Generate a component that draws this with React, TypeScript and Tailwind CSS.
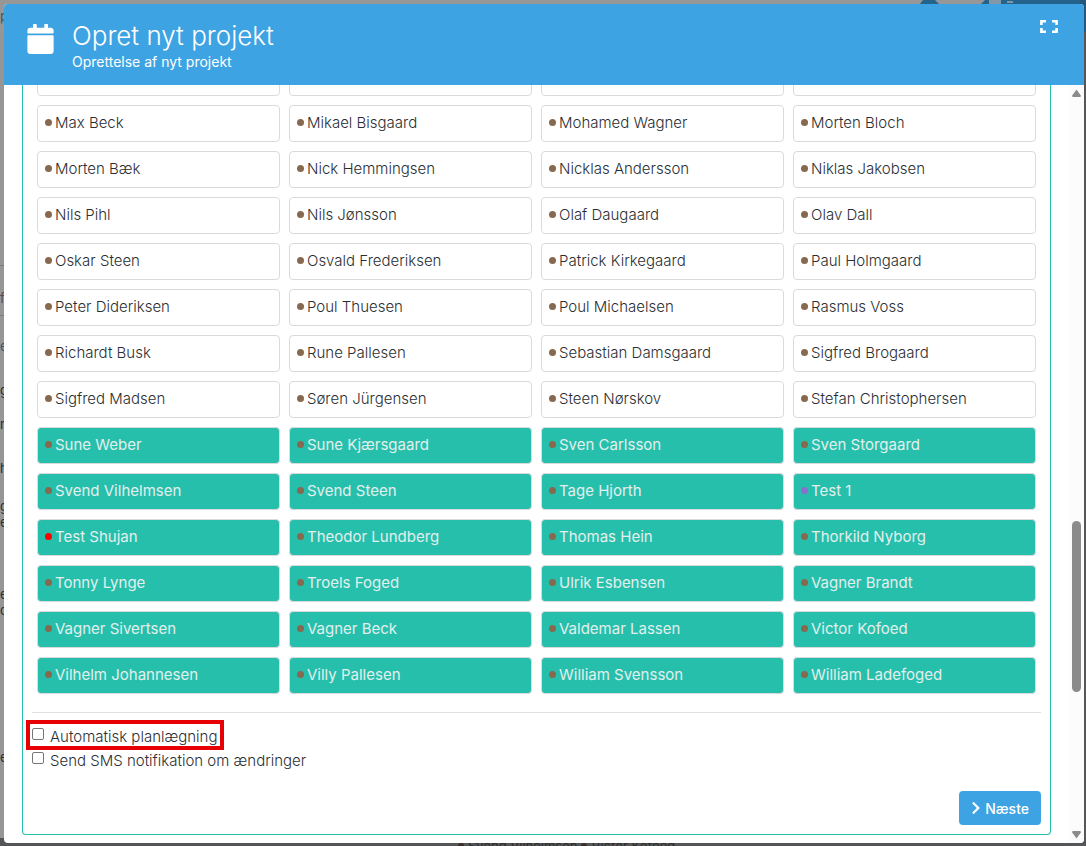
import React from "react";
import { FaCalendar, FaChevronRight } from "react-icons/fa";

type Person = { name: string; selected?: boolean; tone?: "brown" | "red" | "violet" };

const available = [
  "Max Beck", "Mikael Bisgaard", "Mohamed Wagner", "Morten Bloch",
  "Morten Bæk", "Nick Hemmingsen", "Nicklas Andersson", "Niklas Jakobsen",
  "Nils Pihl", "Nils Jønsson", "Olaf Daugaard", "Olav Dall",
  "Oskar Steen", "Osvald Frederiksen", "Patrick Kirkegaard", "Paul Holmgaard",
  "Peter Dideriksen", "Poul Thuesen", "Poul Michaelsen", "Rasmus Voss",
  "Richardt Busk", "Rune Pallesen", "Sebastian Damsgaard", "Sigfred Brogaard",
  "Sigfred Madsen", "Søren Jürgensen", "Steen Nørskov", "Stefan Christophersen",
];

const chosen = [
  "Sune Weber", "Sune Kjærsgaard", "Sven Carlsson", "Sven Storgaard",
  "Svend Vilhelmsen", "Svend Steen", "Tage Hjorth", "Test 1",
  "Test Shujan", "Theodor Lundberg", "Thomas Hein", "Thorkild Nyborg",
  "Tonny Lynge", "Troels Foged", "Ulrik Esbensen", "Vagner Brandt",
  "Vagner Sivertsen", "Vagner Beck", "Valdemar Lassen", "Victor Kofoed",
  "Vilhelm Johannesen", "Villy Pallesen", "William Svensson", "William Ladefoged",
];

const people: Person[] = [
  ...available.map((name): Person => ({ name })),
  ...chosen.map((name): Person => ({
    name,
    selected: true,
    tone: name === "Test 1" ? "violet" : name === "Test Shujan" ? "red" : "brown",
  })),
];

const tones = {
  brown: "bg-[#86694f]",
  red: "bg-[#ff0000]",
  violet: "bg-[#8a6fd0]",
};

function PersonCard({ name, selected, tone = "brown" }: Person) {
  return (
    <button
      type="button"
      aria-pressed={!!selected}
      className={
        "flex h-[37px] items-start gap-[3px] rounded-[4px] border border-[#d9dadb] px-[7px] pt-[7px] text-left text-[15px] leading-5 whitespace-nowrap " +
        (selected ? "bg-[#26bfac] text-[#e3efec]" : "bg-white font-light text-[#2b2f33]")
      }
    >
      <span className={"mt-[6px] size-[7px] shrink-0 rounded-full " + tones[tone]} />
      <span>{name}</span>
    </button>
  );
}

function Backdrop() {
  return (
    <div aria-hidden="true" className="flex h-full flex-col bg-[#555657] text-[13px] leading-4 text-[#2c2c2c]">
      <div className="flex h-8 shrink-0 justify-between bg-[#979797]">
        <span className="pt-2 text-[#40536b]">p</span>
        <div className="flex">
          <svg className="h-1 w-[160px]" viewBox="0 0 160 4">
            <path d="M0 4 3 0H15L19 4ZM61 4 65 0H160V4Z" fill="#24638c" />
            <path d="M69 0H81V4H69ZM87 1H93V3H87Z" fill="#8298a8" />
          </svg>
          <div className="h-8 w-[6px] bg-[#24597c]" />
        </div>
      </div>
      <div className="flex min-h-0 flex-1">
        <div className="flex w-10 flex-col bg-[#979696]">
          <div className="mt-[233px] h-[51px] border-y border-[#7e7e7e] pt-[24px] text-[#5d4b42]">ft</div>
          <div className="mt-[22px] text-[#40536b]">e</div>
          <div className="mt-[28px]">g</div>
          <div className="mt-[18px]">r</div>
          <div className="mt-[28px]">h</div>
          <div className="mt-[22px]">g</div>
          <div>e</div>
          <div className="mt-[56px]">e</div>
          <div>c</div>
          <div className="mt-[131px]">e</div>
        </div>
      </div>
      <div className="flex h-[8px] shrink-0 items-start gap-1 overflow-hidden bg-[#555657] pl-[458px]">
        <span className="flex items-center gap-1">
          <i className="size-[6px] rounded-full bg-[#3a2f2a]" />
          Svend Vilhelmsen
        </span>
        <span className="flex items-center gap-1">
          <i className="size-[6px] rounded-full bg-[#3a2f2a]" />
          Victor Kofoed
        </span>
      </div>
    </div>
  );
}

function ScrollBar() {
  return (
    <div aria-hidden="true" className="flex w-[15px] shrink-0 flex-col items-center bg-[#fcfcfc] pt-[4px] pb-1">
      <svg className="size-[9px] shrink-0" viewBox="0 0 9 9">
        <path d="M4.5 .5 8.8 6.4Q9.2 7.8 7.8 8H1.2Q-.2 7.8.2 6.4Z" fill="#8b8b8b" />
      </svg>
      <div className="flex-[423]" />
      <div className="w-[9px] flex-[171] rounded-full bg-[#8b8b8b]" />
      <div className="flex-[138]" />
      <svg className="size-[9px] shrink-0" viewBox="0 0 9 9">
        <path d="M4.5 8.5 8.8 2.6Q9.2 1.2 7.8 1H1.2Q-.2 1.2.2 2.6Z" fill="#8b8b8b" />
      </svg>
    </div>
  );
}

export default function App() {
  return (
    <div className="relative h-screen overflow-hidden font-['Inter',sans-serif]">
      <Backdrop />
      <div
        role="dialog"
        aria-labelledby="dialog-title"
        className="absolute inset-x-0 inset-y-0 mt-1 mr-[2px] mb-[3px] ml-1 flex flex-col overflow-hidden rounded-[4px] bg-white"
      >
        <header className="flex h-[81px] shrink-0 items-start bg-[#3ea3e2] pr-[26px] pl-[23px] text-white">
          <FaCalendar className="mt-[20px] h-[30px] w-[27px]" />
          <div className="ml-[18px] flex-1 pt-4">
            <h1 id="dialog-title" className="text-[26px] leading-8 font-light">Opret nyt projekt</h1>
            <p className="text-[14px] leading-5">Oprettelse af nyt projekt</p>
          </div>
          <button type="button" aria-label="Fuld skærm" className="mt-4">
            <svg width="18" height="13" viewBox="0 0 18 13" fill="none" stroke="#fff" strokeWidth="2.6">
              <path d="M1.4 5V1.3H6M12 1.3H16.6V5M16.6 8V11.7H12M6 11.7H1.4V8" />
            </svg>
          </button>
        </header>
        <div className="flex min-h-0 flex-1">
          <div className="flex min-w-0 flex-1 flex-col justify-end overflow-hidden px-[18px] pb-2">
            <div className="rounded-b-[4px] border border-t-0 border-[#26bfac] p-[9px]">
              <div className="mx-[5px] grid grid-cols-4 gap-[9px]">
                {[0, 1, 2, 3].map((i) => (
                  <div key={i} className="h-[37px] rounded-[4px] border border-[#d9dadb]" />
                ))}
                {people.map((p) => (
                  <PersonCard key={p.name} {...p} />
                ))}
              </div>
              <hr className="mt-[18px] border-[#dfe0e1]" />
              <div className="mt-3 flex flex-col items-start text-[15px] leading-6 font-light text-[#2b2f33]">
                <label className="relative flex items-start gap-[6px]">
                  <input type="checkbox" className="mt-[3px] size-3 appearance-none rounded-[2px] border border-[#767676] bg-white" />
                  Automatisk planlægning
                  <span className="pointer-events-none absolute -top-[5px] -right-[7px] -bottom-px -left-[6px] border-4 border-[#e60004]" />
                </label>
                <label className="flex items-start gap-[6px]">
                  <input type="checkbox" className="mt-[3px] size-3 appearance-none rounded-[2px] border border-[#767676] bg-white" />
                  Send SMS notifikation om ændringer
                </label>
              </div>
              <div className="mt-[18px] flex justify-end">
                <button type="button" className="flex h-[34px] items-center gap-1 rounded-[4px] bg-[#3ea3e2] px-3 text-[14px] font-medium text-white">
                  <FaChevronRight className="h-[14px] w-[10px]" />
                  Næste
                </button>
              </div>
            </div>
          </div>
          <ScrollBar />
        </div>
      </div>
    </div>
  );
}
